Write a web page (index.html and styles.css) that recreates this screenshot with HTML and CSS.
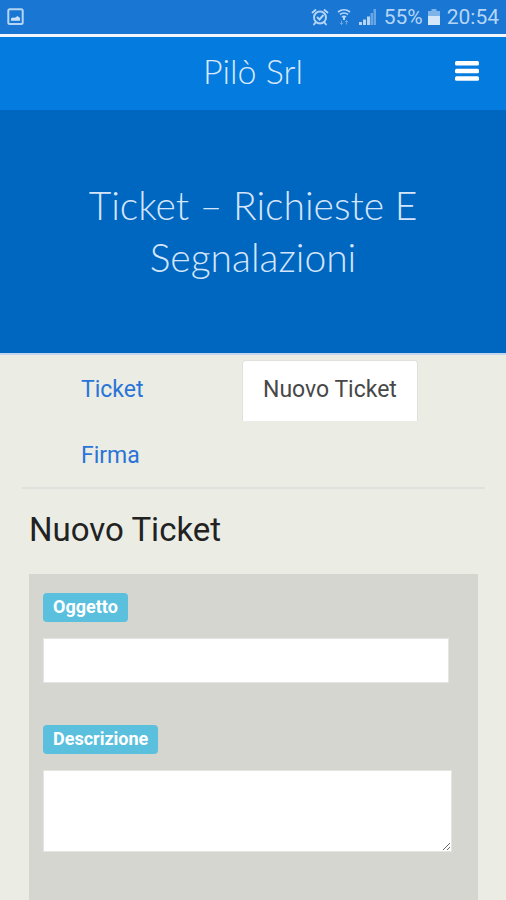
FILE: index.html
```html
<!DOCTYPE html>
<html lang="it">
<head>
<meta charset="utf-8">
<meta name="viewport" content="width=device-width, initial-scale=1">
<title>Pilò Srl</title>
<link rel="stylesheet" href="styles.css">
</head>
<body>
<div class="status">
  <svg class="status-picture" width="18" height="18" viewBox="0 0 18 18" aria-hidden="true">
    <rect x="1.3" y="1.3" width="14.4" height="14.8" rx="1.5" fill="none" stroke="#b5d5f6" stroke-width="2"/>
    <path d="M4 12.800V10.200L6 9.500 8 9.800 10.500 8 13 10v2.800z" fill="#c9e0f8"/>
  </svg>
  <svg width="18" height="18" viewBox="0 0 18 18" fill="none" stroke="#b5d5f6" stroke-width="1.900" stroke-linecap="round" aria-hidden="true">
    <circle cx="9" cy="9.500" r="6"/>
    <path d="M1.500 4.500 4.500 2M16.500 4.500 13.500 2M4.500 14.500 3 16.500M13.500 14.500 15 16.500M6.500 9.500 8.500 11.500 12 7.500"/>
  </svg>
  <svg class="status-wifi" width="14" height="18" viewBox="0 0 14 18" fill="none" stroke="#b5d5f6" stroke-width="1.700" aria-hidden="true">
    <path d="M1 4Q7-.5 13 4M3 6.500Q7 3.500 11 6.500M5 9Q7 7.500 9 9"/>
    <path d="M7 9v3" stroke-width="2"/>
    <path d="M4.500 12.500v4M3 14.800l1.500 1.700L6 14.800M9.500 16.500v-4M8 14.200l1.500-1.700 1.500 1.700" stroke="#6fa9e3" stroke-width="1"/>
  </svg>
  <svg width="18" height="18" viewBox="0 0 18 18" fill="#b5d5f6" aria-hidden="true">
    <path d="M0 14h3v3H0zM4 11.500h3V17H4zM8 8.500h3V17H8z"/>
    <path d="M11.500 5H14v12h-2.500zM14.500 1H17v16h-2.500z" opacity=".5"/>
  </svg>
  <span>55%</span>
  <svg class="status-battery" width="12" height="18" viewBox="0 0 12 18" aria-hidden="true">
    <path d="M3.500 1h5v2H12v5H0V3h3.500z" fill="#7fb4e8"/>
    <path d="M0 8h12v9H0z" fill="#d3e6fa"/>
  </svg>
  <span>20:54</span>
</div>
<header class="bar">
  <a class="brand" href="#">Pilò Srl</a>
  <button class="menu" type="button" aria-label="Menu">
    <svg width="24" height="20" viewBox="0 0 24 20" fill="#fff" aria-hidden="true">
      <rect width="24" height="4.500" rx="1.500"/><rect y="7.700" width="24" height="4.500" rx="1.500"/><rect y="15.300" width="24" height="4.500" rx="1.500"/>
    </svg>
  </button>
</header>
<div class="hero"><h1>Ticket – Richieste E Segnalazioni</h1></div>
<main>
  <nav class="tabs">
    <a href="#">Ticket</a>
    <a class="active" href="#" aria-current="page">Nuovo Ticket</a>
    <a href="#">Firma</a>
  </nav>
  <h2>Nuovo Ticket</h2>
  <form class="panel">
    <div class="field">
      <label for="oggetto">Oggetto</label>
      <input id="oggetto" type="text">
    </div>
    <div class="field">
      <label for="descrizione">Descrizione</label>
      <textarea id="descrizione"></textarea>
    </div>
  </form>
</main>
</body>
</html>
```
FILE: styles.css
```css
* { box-sizing: border-box; }

body {
  margin: 0;
  min-height: 100vh;
  display: flex;
  flex-direction: column;
  background: #ebede4;
  color: #222;
  font-family: Roboto, sans-serif;
}

.status {
  display: flex;
  align-items: center;
  gap: 7px;
  height: 34px;
  padding: 0 7px;
  background: #1976d2;
  color: #b5d5f6;
  font-size: 21px;
}

.status-picture { margin-right: auto; }
.status-wifi { margin: 0 1px; }
.status-battery { margin-left: -2px; }

.bar {
  display: grid;
  grid-template-columns: 1fr auto 1fr;
  align-items: center;
  height: 76px;
  padding: 0 27px 6px;
  border-top: 3px solid #f2f7fd;
  background: #047bde;
}

.brand {
  grid-column: 2;
  color: #d9e9fb;
  font: 300 34px/40px Lato, sans-serif;
  text-decoration: none;
}

.menu {
  justify-self: end;
  display: flex;
  padding: 0;
  border: 0;
  background: none;
}

.hero {
  padding: 69px 48px 70px;
  border-bottom: 2px solid #c4d5ee;
  background: #0067c0;
  color: #d5e5fb;
}

h1 {
  margin: 0;
  font: 300 39px/52px Lato, sans-serif;
  text-align: center;
}

main {
  flex: 1;
  display: flex;
  flex-direction: column;
  padding: 5px 28px 0 29px;
}

.tabs {
  display: grid;
  grid-template-columns: 182px auto;
  justify-content: start;
  row-gap: 5px;
  margin: 0 -7px;
  padding: 0 0 0 38px;
  border-bottom: 2px solid #dfe1dd;
}

.tabs a {
  justify-self: start;
  padding: 14px 20px 16px;
  border: 1px solid transparent;
  border-bottom: 0;
  border-radius: 4px 4px 0 0;
  color: #2a74d8;
  font-size: 23px;
  line-height: 30px;
  text-decoration: none;
}

.tabs .active {
  border-color: #dfe1dd;
  background: #fff;
  color: #484848;
}

h2 {
  margin: 20px 0 23px;
  font-size: 33px;
  font-weight: 400;
  line-height: 42px;
}

.panel {
  flex: 1;
  display: flex;
  flex-direction: column;
  gap: 42px;
  padding: 19px 26px 40px 14px;
  background: #d4d6cf;
}

.field {
  display: flex;
  flex-direction: column;
  align-items: flex-start;
  gap: 16px;
}

label {
  padding: 0 10px 2px;
  border-radius: 4px;
  background: #5bc0de;
  color: #fff;
  font-size: 18px;
  font-weight: 700;
  line-height: 27px;
}

input,
textarea {
  display: block;
  width: 100%;
  border: 1px solid #e4e5e1;
  background: #fff;
  font: 20px Roboto, sans-serif;
}

input {
  width: calc(100% - 3px);
  height: 45px;
}

textarea { height: 82px; }
```
